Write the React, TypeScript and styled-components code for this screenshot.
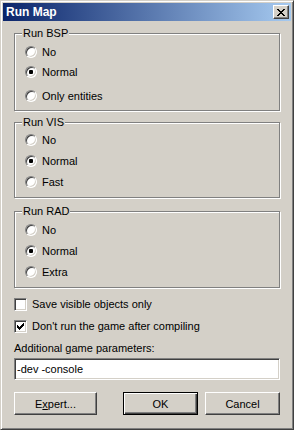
import React from "react";
import styled, { createGlobalStyle } from "styled-components";

const GlobalStyle = createGlobalStyle`
  html, body {
    margin: 0;
    padding: 0;
    background: #d4d0c8;
  }
  * {
    box-sizing: border-box;
  }
`;

const Window = styled.div`
  width: 294px;
  height: 430px;
  padding: 2px;
  background: #d4d0c8;
  border: 1px solid;
  border-color: #d4d0c8 #404040 #404040 #d4d0c8;
  box-shadow: inset 1px 1px #fff, inset -1px -1px #808080;
  font-family: "Liberation Sans", Arial, sans-serif;
  font-size: 11px;
  color: #000;
  display: flex;
  flex-direction: column;
`;

const TitleBar = styled.div`
  height: 18px;
  display: flex;
  align-items: center;
  justify-content: space-between;
  padding: 0 2px 0 3px;
  background: linear-gradient(to right, #0a246a, #a6caf0);
`;

const Title = styled.span`
  color: #fff;
  font-weight: bold;
  font-size: 12px;
  line-height: 14px;
`;

const CloseButton = styled.button`
  width: 16px;
  height: 14px;
  padding: 0;
  display: flex;
  align-items: center;
  justify-content: center;
  background: #d4d0c8;
  border: 1px solid;
  border-color: #fff #404040 #404040 #fff;
  box-shadow: inset -1px -1px #808080;
`;

const Body = styled.div`
  flex: 1;
  display: flex;
  flex-direction: column;
  padding: 12px 11px 0 11px;
`;

const Group = styled.div<{ $top: number; $pt: number; $pb: number }>`
  position: relative;
  margin-top: ${(p) => p.$top}px;
  padding: ${(p) => p.$pt}px 0 ${(p) => p.$pb}px 10px;
  border: 1px solid #808080;
  box-shadow: inset 1px 1px #fff, 1px 1px #fff;
  display: flex;
  flex-direction: column;
`;

const Legend = styled.span`
  position: absolute;
  top: -7px;
  left: 7px;
  padding: 0 1px;
  line-height: 13px;
  background: #d4d0c8;
`;

const OptionRow = styled.label<{ $gap: number }>`
  display: flex;
  align-items: center;
  gap: 5px;
  height: 12px;
  line-height: 12px;
  margin-top: ${(p) => p.$gap}px;
`;

const RadioCircle = styled.span<{ $checked: boolean }>`
  position: relative;
  width: 12px;
  height: 12px;
  border-radius: 50%;
  background: #fff;
  border: 1px solid;
  border-color: #808080 #fff #fff #808080;
  box-shadow: inset 1px 1px #404040, inset -1px -1px #d4d0c8;

  &::after {
    content: "";
    display: ${(p) => (p.$checked ? "block" : "none")};
    position: absolute;
    left: 3px;
    top: 3px;
    width: 4px;
    height: 4px;
    border-radius: 1px;
    background: #000;
  }
`;

const CheckRow = styled.label<{ $gap: number }>`
  display: flex;
  align-items: center;
  gap: 5px;
  height: 13px;
  line-height: 13px;
  margin-top: ${(p) => p.$gap}px;
`;

const CheckBox = styled.span`
  width: 13px;
  height: 13px;
  display: flex;
  align-items: center;
  justify-content: center;
  background: #fff;
  border: 1px solid;
  border-color: #808080 #fff #fff #808080;
  box-shadow: inset 1px 1px #404040, inset -1px -1px #d4d0c8;
`;

const FieldLabel = styled.div`
  margin-top: 9px;
  line-height: 13px;
`;

const TextBox = styled.input`
  margin-top: 3px;
  width: 100%;
  height: 22px;
  padding: 0 0 0 2px;
  font-family: "Liberation Sans", Arial, sans-serif;
  font-size: 11px;
  color: #000;
  background: #fff;
  outline: none;
  border: 1px solid;
  border-color: #808080 #fff #fff #808080;
  box-shadow: inset 1px 1px #404040, inset -1px -1px #d4d0c8;
`;

const ButtonRow = styled.div`
  margin-top: 12px;
  display: flex;
  gap: 7px;
`;

const Button = styled.button<{ $width: number; $default?: boolean }>`
  width: ${(p) => p.$width}px;
  height: 23px;
  padding: 0;
  font-family: "Liberation Sans", Arial, sans-serif;
  font-size: 11px;
  color: #000;
  background: #d4d0c8;
  border: 1px solid;
  border-color: ${(p) => (p.$default ? "#000" : "#fff #404040 #404040 #fff")};
  box-shadow: ${(p) =>
    p.$default
      ? "inset 1px 1px #fff, inset -1px -1px #404040, inset -2px -2px #808080"
      : "inset -1px -1px #808080"};

  &:first-child {
    margin-right: auto;
  }
`;

const CloseGlyph = () => (
  <svg width="8" height="7" viewBox="0 0 8 7" shapeRendering="crispEdges">
    <path
      d="M0 0h2v1H0zM6 0h2v1H6zM1 1h2v1H1zM5 1h2v1H5zM2 2h4v1H2zM3 3h2v1H3zM2 4h4v1H2zM1 5h2v1H1zM5 5h2v1H5zM0 6h2v1H0zM6 6h2v1H6z"
      fill="#000"
    />
  </svg>
);

const CheckGlyph = () => (
  <svg width="7" height="7" viewBox="0 0 7 7" shapeRendering="crispEdges">
    <path
      d="M6 0h1v1H6zM5 1h2v1H5zM0 2h1v1H0zM4 2h3v1H4zM0 3h2v1H0zM3 3h3v1H3zM0 4h5v1H0zM1 5h3v1H1zM2 6h1v1H2z"
      fill="#000"
    />
  </svg>
);

type Option = { label: string; gap: number; checked?: boolean };

const groups: { title: string; top: number; pt: number; pb: number; options: Option[] }[] = [
  {
    title: "Run BSP",
    top: 0,
    pt: 12,
    pb: 8,
    options: [
      { label: "No", gap: 0 },
      { label: "Normal", gap: 8, checked: true },
      { label: "Only entities", gap: 12 },
    ],
  },
  {
    title: "Run VIS",
    top: 11,
    pt: 11,
    pb: 9,
    options: [
      { label: "No", gap: 0 },
      { label: "Normal", gap: 9, checked: true },
      { label: "Fast", gap: 9 },
    ],
  },
  {
    title: "Run RAD",
    top: 13,
    pt: 12,
    pb: 9,
    options: [
      { label: "No", gap: 0 },
      { label: "Normal", gap: 9, checked: true },
      { label: "Extra", gap: 9 },
    ],
  },
];

const App = () => {
  return (
    <>
      <GlobalStyle />
      <Window>
        <TitleBar>
          <Title>Run Map</Title>
          <CloseButton>
            <CloseGlyph />
          </CloseButton>
        </TitleBar>
        <Body>
          {groups.map((g) => (
            <Group key={g.title} $top={g.top} $pt={g.pt} $pb={g.pb}>
              <Legend>{g.title}</Legend>
              {g.options.map((o) => (
                <OptionRow key={o.label} $gap={o.gap}>
                  <RadioCircle $checked={!!o.checked} />
                  {o.label}
                </OptionRow>
              ))}
            </Group>
          ))}

          <CheckRow $gap={10}>
            <CheckBox />
            Save visible objects only
          </CheckRow>
          <CheckRow $gap={9}>
            <CheckBox>
              <CheckGlyph />
            </CheckBox>
            Don't run the game after compiling
          </CheckRow>

          <FieldLabel>Additional game parameters:</FieldLabel>
          <TextBox defaultValue="-dev -console" readOnly />

          <ButtonRow>
            <Button $width={83}>
              E<u>x</u>pert...
            </Button>
            <Button $width={75} $default>
              OK
            </Button>
            <Button $width={75}>Cancel</Button>
          </ButtonRow>
        </Body>
      </Window>
    </>
  );
};

export default App;
